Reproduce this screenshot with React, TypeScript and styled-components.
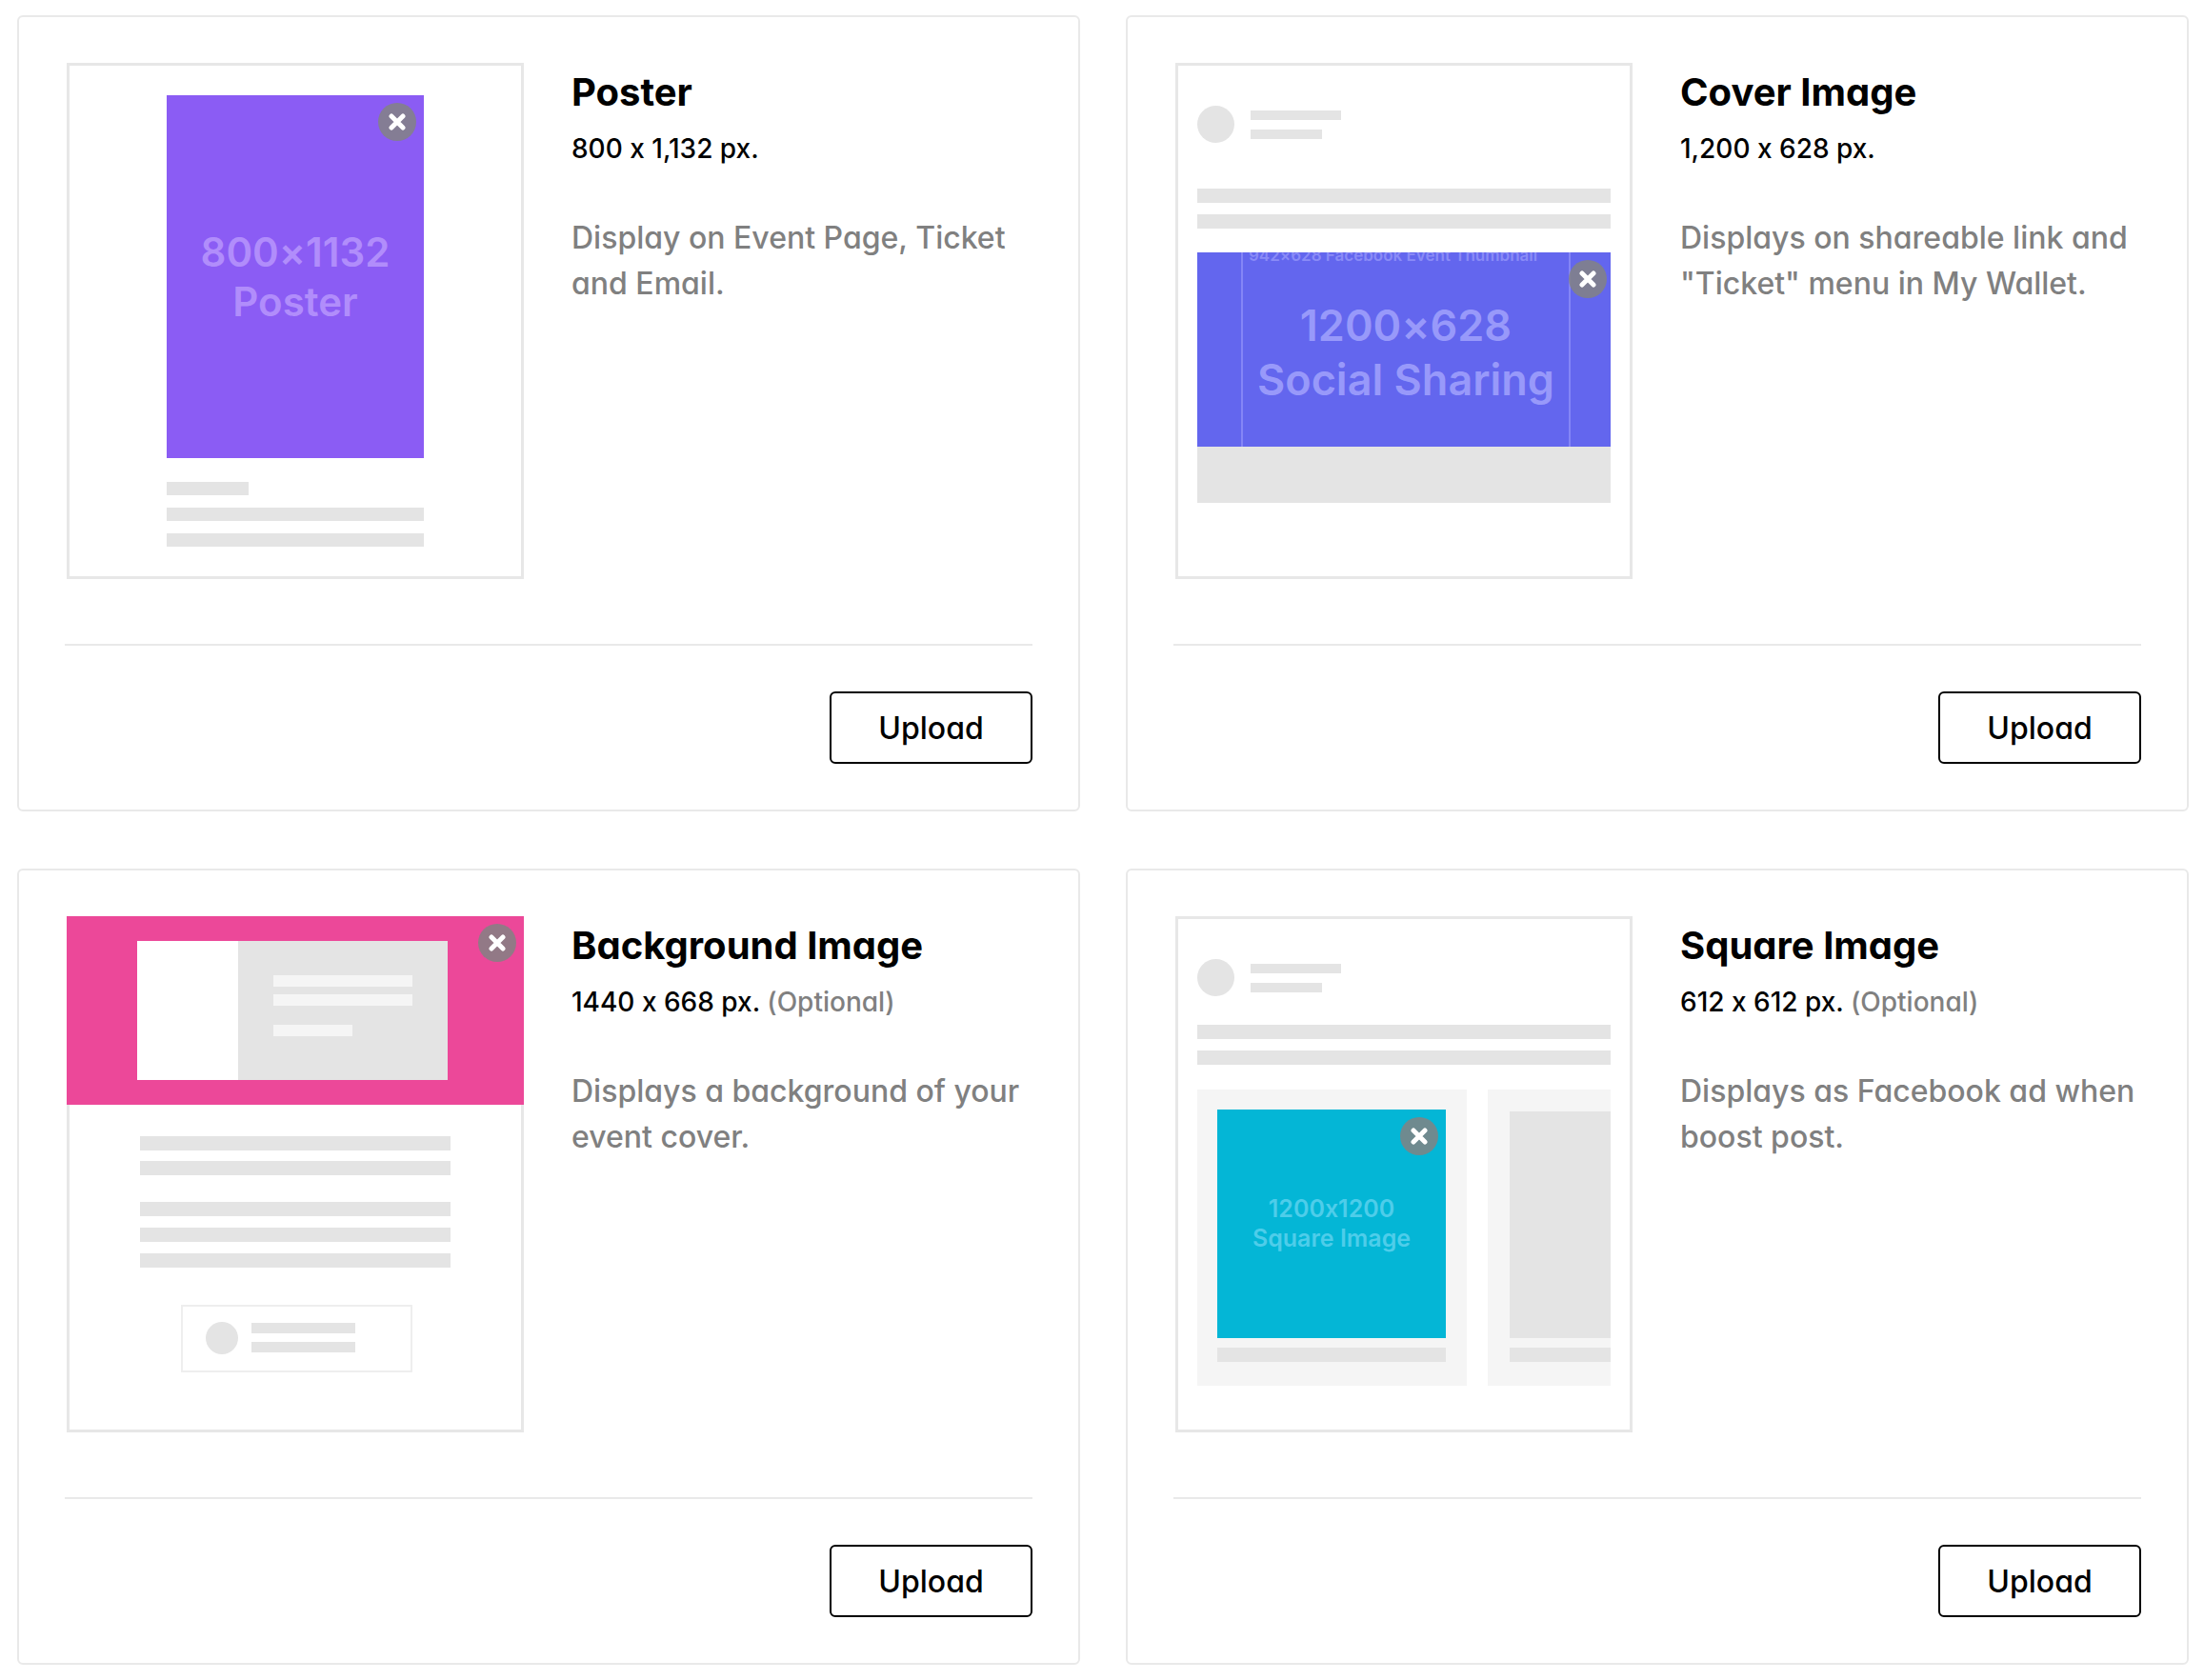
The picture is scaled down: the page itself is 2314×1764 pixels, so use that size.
import React from "react";
import styled, { createGlobalStyle } from "styled-components";

const GlobalStyle = createGlobalStyle`
  *, *::before, *::after { box-sizing: border-box; }
  body {
    margin: 0;
    background: #ffffff;
    color: #000000;
    font-family: Inter, "Liberation Sans", sans-serif;
    font-variant-ligatures: no-contextual;
  }
  h2, p { margin: 0; }
`;

const Page = styled.main`
  display: grid;
  grid-template-columns: repeat(2, minmax(0, 1fr));
  gap: 60px 48px;
  padding: 16px 16px 16px 18px;

  @media (max-width: 1600px) {
    grid-template-columns: minmax(0, 1fr);
  }
`;

const Card = styled.section`
  display: flex;
  flex-direction: column;
  padding: 48px;
  border: 2px solid #e9e9e9;
  border-radius: 6px;
  background: #ffffff;
`;

const CardBody = styled.div`
  display: flex;
  flex: 1;
  gap: 50px;
  padding: 0 0 68px 2px;

  @media (max-width: 900px) {
    flex-wrap: wrap;
  }
`;

const CardText = styled.div`
  flex: 1;
  min-width: 0;
  font-feature-settings: "cv11";
`;

const Title = styled.h2`
  font-size: 40px;
  font-weight: 700;
  line-height: 62px;
`;

const Dimensions = styled.p`
  font-size: 28px;
  font-weight: 500;
  line-height: 56px;
`;

const Optional = styled.span`
  color: #808080;
`;

const Description = styled.p`
  margin-top: 42px;
  color: #808080;
  font-size: 32px;
  font-weight: 500;
  line-height: 48px;
`;

const CardFooter = styled.footer`
  display: flex;
  justify-content: flex-end;
  padding-top: 48px;
  border-top: 2px solid #e9e9e9;
`;

const UploadButton = styled.button`
  min-width: 213px;
  height: 76px;
  padding: 0 48px;
  border: 2px solid #000000;
  border-radius: 6px;
  background: #ffffff;
  color: #000000;
  font-family: inherit;
  font-size: 32px;
  font-weight: 500;
  font-feature-settings: "cv11";
  cursor: pointer;
`;

const Frame = styled.div<{ $padding?: string }>`
  display: flex;
  flex: none;
  flex-direction: column;
  width: 480px;
  height: 542px;
  padding: ${(p) => p.$padding ?? "0"};
  border: 3px solid #e7e7e7;
`;

const Stack = styled.div<{ $gap: number; $top?: number; $padding?: string }>`
  display: flex;
  flex-direction: column;
  gap: ${(p) => p.$gap}px;
  margin-top: ${(p) => p.$top ?? 0}px;
  padding: ${(p) => p.$padding ?? "0"};
`;

const Bar = styled.div<{ $width?: number; $height?: number; $light?: boolean }>`
  width: ${(p) => (p.$width ? `${p.$width}px` : "100%")};
  height: ${(p) => p.$height ?? 15}px;
  background: ${(p) => (p.$light ? "#f5f5f5" : "#e4e4e4")};
`;

const Avatar = styled.div<{ $size: number }>`
  flex: none;
  width: ${(p) => p.$size}px;
  height: ${(p) => p.$size}px;
  border-radius: 50%;
  background: #e4e4e4;
`;

const Profile = styled.div`
  display: flex;
  align-items: center;
  gap: 17px;
`;

const Artwork = styled.div<{ $fill: string; $ink: string; $height: number }>`
  position: relative;
  display: flex;
  align-items: center;
  justify-content: center;
  height: ${(p) => p.$height}px;
  overflow: hidden;
  background: ${(p) => p.$fill};
  color: ${(p) => p.$ink};
`;

const ArtworkLabel = styled.div<{ $size: number; $line: number }>`
  font-size: ${(p) => p.$size}px;
  font-weight: 600;
  line-height: ${(p) => p.$line}px;
  text-align: center;
  white-space: nowrap;
`;

const RemoveButton = styled.button<{ $inset: number }>`
  position: absolute;
  top: 8px;
  right: ${(p) => p.$inset}px;
  display: flex;
  align-items: center;
  justify-content: center;
  width: 40px;
  height: 40px;
  padding: 0;
  border: 0;
  border-radius: 50%;
  background: rgba(130, 130, 130, 0.85);
  cursor: pointer;
`;

/* Central part of the wide cover that stays visible in event thumbnails. */
const SafeArea = styled.div`
  display: flex;
  flex: none;
  flex-direction: column;
  gap: 34px;
  width: 346px;
  height: 228px;
  margin-left: 4px;
  padding-top: 4px;
  border: solid #8485f6;
  border-width: 0 2px;
`;

const SafeAreaCaption = styled.div`
  padding-left: 6px;
  color: #8a8bf7;
  font-size: 17px;
  font-weight: 600;
  line-height: 22px;
  white-space: nowrap;
`;

const Grey = styled.div`
  height: 59px;
  background: #e4e4e4;
`;

const Banner = styled(Artwork)`
  flex: none;
  margin: -3px -3px 0;
  padding-right: 6px;
`;

const EventCover = styled.div`
  display: grid;
  grid-template-columns: 106px 1fr;
  width: 326px;
  height: 146px;
  background: #ffffff;
`;

const EventCoverText = styled.div`
  display: flex;
  flex-direction: column;
  gap: 8px;
  padding: 36px 37px 0;
  background: #e4e4e4;
`;

const Organizer = styled.div`
  display: flex;
  align-items: center;
  gap: 14px;
  width: 243px;
  height: 71px;
  margin: 39px 0 0 117px;
  padding: 0 0 2px 24px;
  border: 2px solid #eeeeee;
`;

const Carousel = styled.div`
  display: grid;
  grid-template-columns: 283px 129px;
  justify-content: space-between;
  height: 311px;
  margin-top: 26px;
`;

const Slide = styled.div<{ $padding: string }>`
  display: flex;
  flex-direction: column;
  gap: 10px;
  padding: ${(p) => p.$padding};
  background: #f5f5f5;
`;

function Remove({ label, inset = 8 }: { label: string; inset?: number }) {
  return (
    <RemoveButton type="button" aria-label={`Remove ${label}`} $inset={inset}>
      <svg width="18" height="18" viewBox="0 0 18 18" aria-hidden="true">
        <path
          d="M3 3 15 15M15 3 3 15"
          fill="none"
          stroke="#ffffff"
          strokeWidth="5"
          strokeLinecap="round"
        />
      </svg>
    </RemoveButton>
  );
}

function PostHeader() {
  return (
    <Profile>
      <Avatar $size={39} />
      <Stack $gap={10}>
        <Bar $width={95} $height={10} />
        <Bar $width={75} $height={10} />
      </Stack>
    </Profile>
  );
}

function PosterPreview() {
  return (
    <Frame $padding="31px 102px 0">
      <Artwork $fill="#8b5cf4" $ink="#b18dfb" $height={381}>
        <ArtworkLabel $size={42} $line={52}>
          800×1132
          <br />
          Poster
        </ArtworkLabel>
        <Remove label="Poster" />
      </Artwork>
      <Stack $gap={13} $top={25}>
        <Bar $width={86} $height={14} />
        <Bar $height={14} />
        <Bar $height={14} />
      </Stack>
    </Frame>
  );
}

function CoverPreview() {
  return (
    <Frame $padding="42px 20px 0">
      <PostHeader />
      <Stack $gap={12} $top={48}>
        <Bar />
        <Bar />
      </Stack>
      <Stack $gap={0} $top={25}>
        <Artwork $fill="#6366ee" $ink="#9899fa" $height={204}>
          <SafeArea>
            <SafeAreaCaption>942×628 Facebook Event Thumbnail</SafeAreaCaption>
            <ArtworkLabel $size={45} $line={57}>
              1200×628
              <br />
              Social Sharing
            </ArtworkLabel>
          </SafeArea>
          <Remove label="Cover Image" inset={4} />
        </Artwork>
        <Grey />
      </Stack>
    </Frame>
  );
}

function BackgroundPreview() {
  return (
    <Frame>
      <Banner $fill="#ec4899" $ink="#ffffff" $height={198}>
        <EventCover>
          <div />
          <EventCoverText>
            <Bar $light $height={12} />
            <Bar $light $height={12} />
            <Stack $gap={0} $top={12}>
              <Bar $light $width={83} $height={12} />
            </Stack>
          </EventCoverText>
        </EventCover>
        <Remove label="Background Image" />
      </Banner>
      <Stack $gap={11} $top={33} $padding="0 74px">
        <Bar />
        <Bar />
      </Stack>
      <Stack $gap={12} $top={28} $padding="0 74px">
        <Bar />
        <Bar />
        <Bar />
      </Stack>
      <Organizer>
        <Avatar $size={34} />
        <Stack $gap={9}>
          <Bar $width={109} $height={11} />
          <Bar $width={109} $height={11} />
        </Stack>
      </Organizer>
    </Frame>
  );
}

function SquarePreview() {
  return (
    <Frame $padding="42px 20px 0">
      <PostHeader />
      <Stack $gap={12} $top={30}>
        <Bar />
        <Bar />
      </Stack>
      <Carousel>
        <Slide $padding="21px 22px 0 21px">
          <Artwork $fill="#04b6d6" $ink="#4ecdea" $height={240}>
            <ArtworkLabel $size={25} $line={31}>
              1200x1200
              <br />
              Square Image
            </ArtworkLabel>
            <Remove label="Square Image" />
          </Artwork>
          <Bar />
        </Slide>
        <Slide $padding="23px 0 0 23px">
          <Bar $height={238} />
          <Bar />
        </Slide>
      </Carousel>
    </Frame>
  );
}

const uploads = [
  {
    title: "Poster",
    size: "800 x 1,132 px.",
    optional: false,
    text: "Display on Event Page, Ticket and Email.",
    Preview: PosterPreview,
  },
  {
    title: "Cover Image",
    size: "1,200 x 628 px.",
    optional: false,
    text: "Displays on shareable link and \"Ticket\" menu in My Wallet.",
    Preview: CoverPreview,
  },
  {
    title: "Background Image",
    size: "1440 x 668 px.",
    optional: true,
    text: "Displays a background of your event cover.",
    Preview: BackgroundPreview,
  },
  {
    title: "Square Image",
    size: "612 x 612 px.",
    optional: true,
    text: "Displays as Facebook ad when boost post.",
    Preview: SquarePreview,
  },
];

export default function App() {
  return (
    <>
      <GlobalStyle />
      <Page>
        {uploads.map(({ title, size, optional, text, Preview }) => (
          <Card key={title}>
            <CardBody>
              <Preview />
              <CardText>
                <Title>{title}</Title>
                <Dimensions>
                  {size}
                  {optional && <Optional> (Optional)</Optional>}
                </Dimensions>
                <Description>{text}</Description>
              </CardText>
            </CardBody>
            <CardFooter>
              <UploadButton type="button">Upload</UploadButton>
            </CardFooter>
          </Card>
        ))}
      </Page>
    </>
  );
}
